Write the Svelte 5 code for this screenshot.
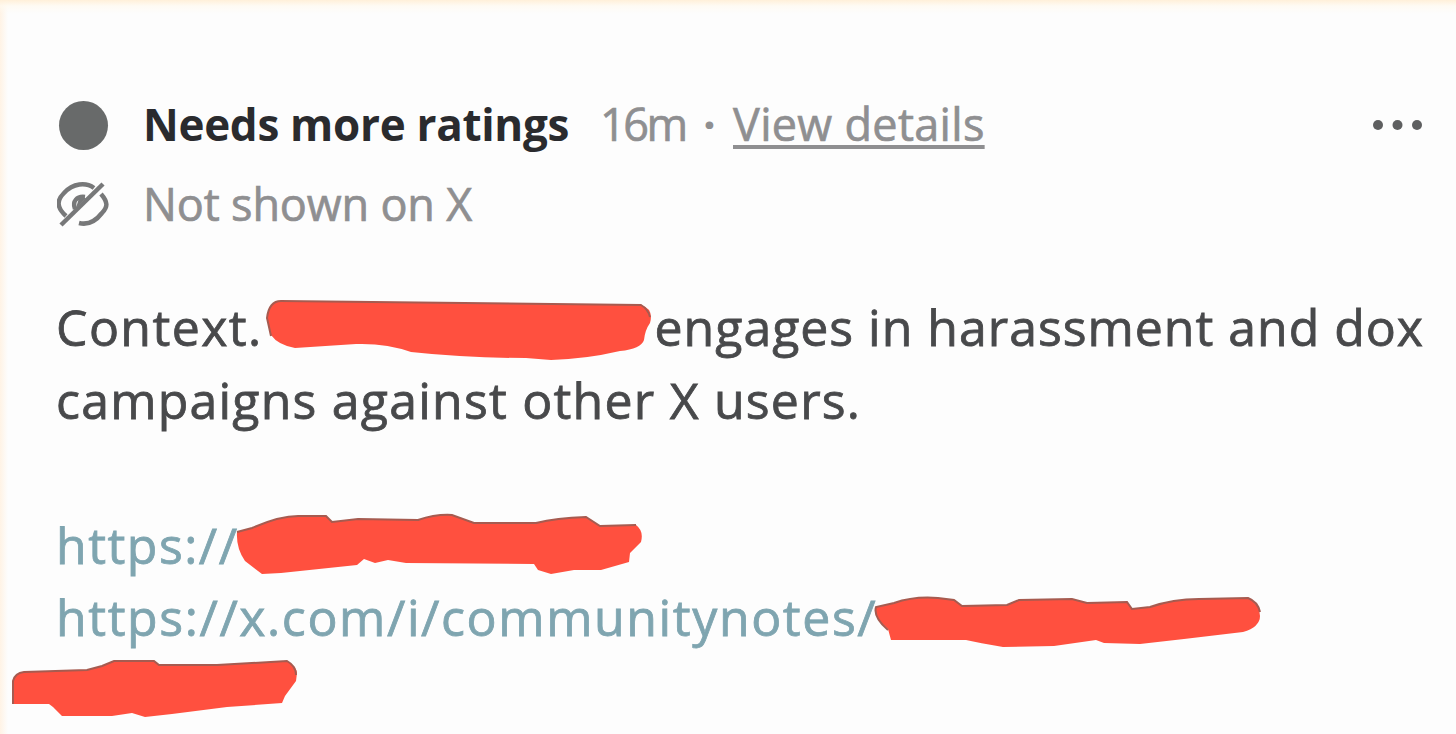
<script lang="ts">
	interface Stroke {
		width: number;
		height: number;
		fill: string;
		edge: string;
	}

	interface Line {
		text: string;
		kind: string;
		mark?: Stroke;
		after?: string;
	}

	const lines: Line[] = [
		{
			text: 'Context.',
			kind: 'context',
			mark: {
				width: 386,
				height: 60,
				fill: 'M1 17 Q3 1 15 1 L375 5 Q388 9 384 23 Q379 30 378 40 Q375 49 354 51 Q320 59 285 60 L260 58 Q200 58 145 52 Q120 43 90 44 L29 48 Q12 45 5 35 Z',
				edge: 'M5 36 L1 18 Q3 1 15 1 L375 5 Q382 9 384 17'
			},
			after: 'engages in harassment and dox'
		},
		{ text: 'campaigns against other X users.', kind: 'campaigns' },
		{ text: '', kind: 'blank' },
		{
			text: 'https://',
			kind: 'link short',
			mark: {
				width: 408,
				height: 60,
				fill: 'M1 17 L16 13 Q45 0 65 1 L90 1 L96 7 L122 4 L182 5 Q200 -1 216 0 L238 8 L300 8 Q320 3 350 2 L364 11 L400 10 Q408 16 405 27 L394 38 L393 47 L365 55 L338 55 L315 59 L302 55 L298 49 L170 48 L152 45 L139 48 L128 44 L121 50 L45 58 L26 59 L9 46 Q0 33 1 17 Z',
				edge: 'M1 17 L16 13 Q45 0 65 1 L90 1 L96 7 L122 4 L182 5 Q200 -1 216 0 L238 8 L300 8 Q320 3 350 2 L364 11 L400 10'
			}
		},
		{
			text: 'https://x.com/i/communitynotes/',
			kind: 'link long',
			mark: {
				width: 388,
				height: 52,
				fill: 'M2 10 L20 6 Q40 -1 64 1 L80 3 L88 9 L133 8 L145 3 L198 2 L213 6 L253 5 L258 12 L276 10 Q299 2 325 2 L374 1 Q386 7 386 19 Q386 30 369 35 L310 42 L266 47 L230 46 L222 43 L180 49 L129 50 Q105 46 92 43 L17 43 L14 32 Q-1 20 2 10 Z',
				edge: 'M14 33 Q-1 20 2 10 L20 6 Q40 -1 64 1 L80 3 L88 9 L133 8 L145 3 L198 2 L213 6 L253 5 L258 12 L276 10 Q299 2 325 2 L374 1 Q384 5 386 15'
			}
		},
		{
			text: '',
			kind: 'overflow',
			mark: {
				width: 286,
				height: 58,
				fill: 'M1 43 L1 20 Q3 12 12 11 L75 9 L90 5 L102 0 L142 0 L147 4 L205 4 L275 0 Q284 5 285 12 L284 20 L273 35 L270 42 L215 46 L160 53 L133 56 L120 52 L100 55 L50 55 L41 46 L37 43 Z',
				edge: 'M1 43 L1 20 Q3 12 12 11 L75 9 L90 5 L102 0 L142 0 L147 4 L205 4 L275 0 Q284 5 284 14'
			}
		}
	];
</script>

<article class="note">
	<header class="status">
		<span class="dot"></span>
		<strong class="title">Needs more ratings</strong>
		<span class="age">16m</span>
		<span class="separator">·</span>
		<a class="details" href="#details">View details</a>
		<button class="more" aria-label="More">
			<svg width="52" height="12" viewBox="0 0 52 12">
				<circle cx="6" cy="6" r="5" />
				<circle cx="25.5" cy="6" r="5" />
				<circle cx="45" cy="6" r="5" />
			</svg>
		</button>
	</header>

	<div class="visibility">
		<svg class="eye" width="52" height="46" viewBox="0 0 52 46">
			<path d="M9 34 C-1 25 0 18 7 11 C16 1 29 0 37 6" />
			<path d="M44 12 C51 20 51 25 45 31 C38 40 30 43 22 41" />
			<path d="M18 27 C15 19 20 14 28 15" />
			<path class="pupil" d="M19 26 L29 16 L22 16 Z" />
			<path d="M4 43 L46 2" />
		</svg>
		<span class="hidden-label">Not shown on X</span>
	</div>

	<div class="body">
		{#each lines as line}
			<div class="line {line.kind}">
				{#if line.text}<span class="text">{line.text}</span>{/if}
				{#if line.mark}
					<svg class="mark" width={line.mark.width} height={line.mark.height}>
						<path class="fill" d={line.mark.fill} />
						<path class="edge" d={line.mark.edge} />
					</svg>
				{/if}
				{#if line.after}<span class="after">{line.after}</span>{/if}
			</div>
		{/each}
	</div>
</article>

<style>
	:global(body) {
		background: #fdfdfd;
	}

	.note {
		box-sizing: border-box;
		width: 1456px;
		height: 734px;
		padding: 89px 32px 0 56px;
		overflow: hidden;
		font-family: 'Open Sans', 'Liberation Sans', sans-serif;
		white-space: nowrap;
		background:
			linear-gradient(to bottom, #fff0d9, rgba(255, 250, 240, 0.7) 6px, transparent 14px),
			linear-gradient(to right, #fff3e5, transparent 8px),
			#fdfdfd;
	}

	.status,
	.visibility {
		display: flex;
		align-items: center;
		height: 72px;
		font-size: 45px;
		line-height: 68px;
		color: #8f8f91;
	}

	.visibility {
		height: 88px;
	}

	.title,
	.age,
	.separator,
	.details,
	.hidden-label {
		padding-bottom: 3px;
	}

	.age,
	.details,
	.hidden-label {
		-webkit-text-stroke: 0.7px;
	}

	.dot {
		width: 49px;
		height: 49px;
		margin: 0 35px 0 3px;
		border-radius: 50%;
		background: #686a6a;
	}

	.title {
		width: 457px;
		font-size: 44px;
		font-weight: 700;
		letter-spacing: -0.3px;
		color: #2a2b2e;
	}

	.age {
		width: 103px;
		letter-spacing: -2.5px;
	}

	.separator {
		width: 30px;
		font-weight: 700;
	}

	.details {
		color: #8f8f91;
		letter-spacing: 0.3px;
		text-decoration: underline;
		text-decoration-thickness: 4px;
		text-underline-offset: 4px;
		text-decoration-skip-ink: none;
	}

	.hidden-label {
		letter-spacing: -0.15px;
	}

	.more {
		display: flex;
		margin-left: auto;
		padding: 0;
		border: 0;
		background: none;
		fill: #5e5f60;
	}

	.eye {
		margin: 0 34px 0 1px;
		fill: none;
		stroke: #777879;
		stroke-width: 4.5;
	}

	.pupil {
		fill: #777879;
		stroke: none;
	}

	.body {
		margin-top: 44px;
		font-size: 50px;
		color: #48494b;
		-webkit-text-stroke: 0.8px;
	}

	.line {
		display: flex;
		height: 72.6px;
		line-height: 69px;
	}

	.link {
		color: #7fa5b0;
		letter-spacing: 1.5px;
	}

	.mark {
		flex: none;
		overflow: visible;
	}

	.context .text {
		width: 210px;
		letter-spacing: 1.4px;
	}

	.context .mark {
		margin: 7px 3px 0 0;
	}

	.context .after {
		letter-spacing: 0.98px;
	}

	.campaigns {
		letter-spacing: 1.22px;
	}

	.short .text {
		width: 180px;
	}

	.short .mark {
		margin-top: 4px;
	}

	.long .text {
		width: 818px;
		letter-spacing: 1.6px;
	}

	.long .mark {
		margin-top: 14px;
	}

	.overflow .mark {
		margin: 5px 0 0 -44px;
	}

	.fill {
		fill: #ff503f;
	}

	.edge {
		fill: none;
		stroke: #a65b50;
		stroke-width: 2;
	}
</style>
